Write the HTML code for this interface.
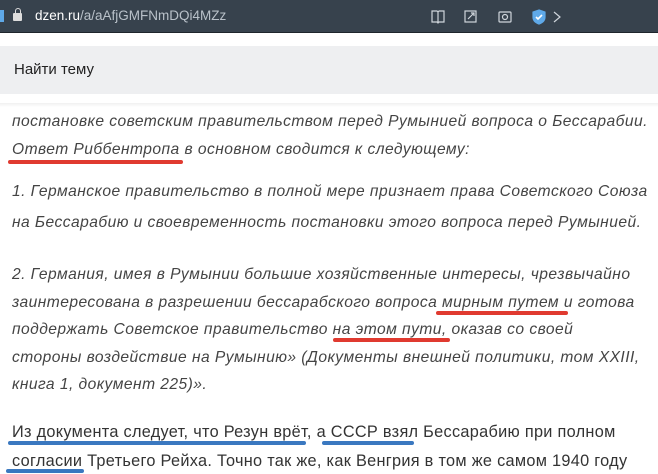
<!DOCTYPE html>
<html><head><meta charset="utf-8"><style>
*{margin:0;padding:0;box-sizing:border-box}
body{width:658px;height:474px;overflow:hidden;background:#fff;font-family:"Liberation Sans","DejaVu Sans",sans-serif;position:relative}
.bar{position:absolute;left:0;top:0;width:658px;height:33px;background:#37424d;border-bottom:1px solid #1e252c}
.url{position:absolute;left:35px;top:8px;font-size:13.5px;color:#b9c1c9}
.url b{color:#fff;font-weight:normal}
.find{position:absolute;left:0;top:46px;width:658px;height:48px;background:#eeeff1}
.find span{position:absolute;left:14px;top:15px;font-size:15px;color:#222}
.t{position:absolute;left:12px;white-space:nowrap;font-size:15.6px;letter-spacing:0.45px;color:#444;font-style:italic}
.n{font-style:normal;color:#333;font-size:16.3px;letter-spacing:0.3px}
.u{position:absolute;height:4px;border-radius:2px}
.r{background:#e03a30}.b{background:#3a78c0}
</style></head><body>
<div class="bar">
<div style="position:absolute;left:0;top:10px;width:4px;height:12px;background:#5fa9e8"></div>
<div style="position:absolute;left:13px;top:13px;width:9px;height:8px;background:#ddd;border-radius:1px"></div>
<div style="position:absolute;left:14.5px;top:8px;width:6px;height:7px;border:1.5px solid #ddd;border-bottom:none;border-radius:3px 3px 0 0"></div>
<div class="url"><b>dzen.ru</b>/a/aAfjGMFNmDQi4MZz</div>
<svg style="position:absolute;left:430px;top:8px" width="228" height="18" fill="none" stroke="#cfd5db" stroke-width="1.2">
<path d="M2 3h5l1 1 1-1h5v11H9l-1 1-1-1H2z M8 4v10"/>
<rect x="35" y="3" width="11" height="11"/><path d="M38 11l6-6M41 5h3v3"/>
<rect x="69" y="4" width="12" height="10" rx="1"/><circle cx="75" cy="9" r="2.5"/>
<path d="M109 2l6 2v5c0 4-3 6-6 7-3-1-6-3-6-7V4z" fill="#5fa9e8" stroke="#5fa9e8"/><path d="M106 9l2 2 4-4" stroke="#fff" stroke-width="1.6"/>
<path d="M124 4l6 5-6 5"/>
</svg>
</div>
<div class="find"><span>Найти тему</span></div>
<div style="position:absolute;left:0;top:103px;width:658px;height:4px;background:linear-gradient(#f0f0f0,#fff)"></div>

<div class="t" style="top:113px">постановке советским правительством перед Румынией вопроса о Бессарабии.</div>
<div class="t" style="top:141px">Ответ Риббентропа в основном сводится к следующему:</div>
<div class="u r" style="left:8px;top:160px;width:175px"></div>
<div class="t" style="top:183px">1. Германское правительство в полной мере признает права Советского Союза</div>
<div class="t" style="top:214px">на Бессарабию и своевременность постановки этого вопроса перед Румынией.</div>
<div class="t" style="top:266px">2. Германия, имея в Румынии большие хозяйственные интересы, чрезвычайно</div>
<div class="t" style="top:294px">заинтересована в разрешении бессарабского вопроса мирным путем и готова</div>
<div class="u r" style="left:436px;top:311px;width:132px"></div>
<div class="t" style="top:321px">поддержать Советское правительство на этом пути, оказав со своей</div>
<div class="u r" style="left:333px;top:338px;width:117px"></div>
<div class="t" style="top:349px">стороны воздействие на Румынию» (Документы внешней политики, том XXIII,</div>
<div class="t" style="top:376px">книга 1, документ 225)».</div>
<div class="t n" style="top:423px">Из документа следует, что Резун врёт, а СССР взял Бессарабию при полном</div>
<div class="u b" style="left:8px;top:441px;width:298px"></div>
<div class="u b" style="left:322px;top:441px;width:92px"></div>
<div class="t n" style="top:452px">согласии Третьего Рейха. Точно так же, как Венгрия в том же самом 1940 году</div>
<div class="u b" style="left:6px;top:469px;width:78px"></div>
</body></html>
